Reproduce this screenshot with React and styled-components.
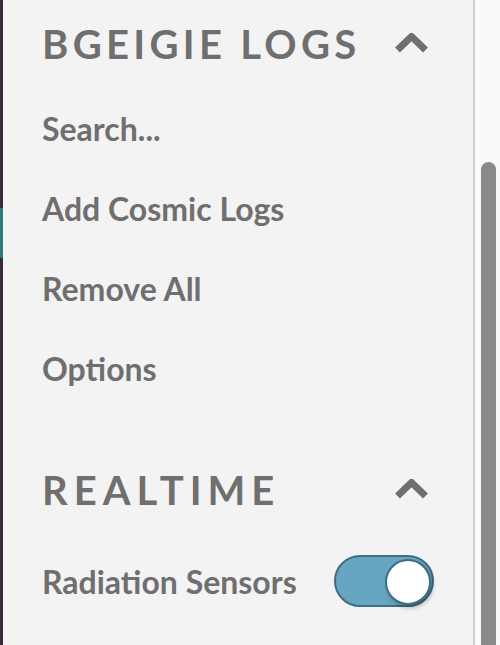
import React from 'react';
import styled, { createGlobalStyle } from 'styled-components';

const GlobalStyle = createGlobalStyle`
  html, body {
    margin: 0;
    padding: 0;
    height: 100%;
    overflow: hidden;
  }
  body {
    font-family: Lato, "Noto Sans", sans-serif;
    background: #fafafa;
  }
  #root {
    height: 100%;
  }
`;

const Page = styled.div`
  display: flex;
  height: 645px;
  width: 500px;
`;

const EdgeStrip = styled.div`
  width: 3px;
  background: linear-gradient(
    to bottom,
    #3b2b3a 0,
    #3b2b3a 208px,
    #2f7c76 208px,
    #2f7c76 258px,
    #3b2b3a 258px
  );
`;

const Panel = styled.div`
  flex: 1;
  display: flex;
  flex-direction: column;
  background: #f3f3f3;
  border-right: 2px solid #cdcdcd;
  padding: 0 45px 0 39px;
`;

const Section = styled.section`
  display: flex;
  flex-direction: column;
`;

const Header = styled.div`
  display: flex;
  align-items: center;
  justify-content: space-between;
  height: ${p => p.$height}px;
  margin-top: ${p => p.$top}px;
`;

const Title = styled.h2`
  margin: 0;
  font-size: 40px;
  font-weight: 700;
  color: #6f6f6f;
  letter-spacing: ${p => p.$spacing}px;
`;

const Chevron = styled.svg`
  width: 33px;
  height: 22px;
  flex: none;
`;

const Item = styled.div`
  height: 80px;
  display: flex;
  align-items: center;
  font-size: 32px;
  font-weight: 700;
  color: #6f6f6f;
`;

const ToggleRow = styled(Item)`
  justify-content: space-between;
  margin-top: 9px;
`;

const Switch = styled.div`
  position: relative;
  width: 100px;
  height: 52px;
  box-sizing: border-box;
  border-radius: 26px;
  background: #67a6c1;
  border: 2px solid #3f6e83;
  margin-right: -6px;
`;

const Knob = styled.div`
  position: absolute;
  top: 2px;
  right: 1px;
  width: 46px;
  height: 46px;
  box-sizing: border-box;
  border-radius: 50%;
  background: #fff;
  border: 2px solid #3f6e83;
  box-shadow: 2px 3px 4px rgba(0, 0, 0, 0.25);
`;

const ScrollTrack = styled.div`
  width: 25px;
  display: flex;
  justify-content: center;
  padding-top: 162px;
  background: #fafafa;
`;

const Thumb = styled.div`
  width: 15px;
  margin-left: 2px;
  background: #8a8a8a;
  border-radius: 8px 8px 0 0;
`;

const Up = () => (
  <Chevron viewBox="0 0 33 22">
    <path d="M2.5 17 L16.5 3.5 L30.5 17" fill="none" stroke="#6f6f6f" strokeWidth="7" strokeLinejoin="miter" />
  </Chevron>
);

export default function App() {
  return (
    <>
      <GlobalStyle />
      <Page>
        <EdgeStrip />
        <Panel>
          <Section>
            <Header $height={88} $top={0}>
              <Title $spacing={4.3}>BGEIGIE LOGS</Title>
              <Up />
            </Header>
            <Item>Search...</Item>
            <Item>Add Cosmic Logs</Item>
            <Item>Remove All</Item>
            <Item>Options</Item>
          </Section>
          <Section>
            <Header $height={84} $top={40}>
              <Title $spacing={6}>REALTIME</Title>
              <Up />
            </Header>
            <ToggleRow>
              Radiation Sensors
              <Switch>
                <Knob />
              </Switch>
            </ToggleRow>
          </Section>
        </Panel>
        <ScrollTrack>
          <Thumb />
        </ScrollTrack>
      </Page>
    </>
  );
}
